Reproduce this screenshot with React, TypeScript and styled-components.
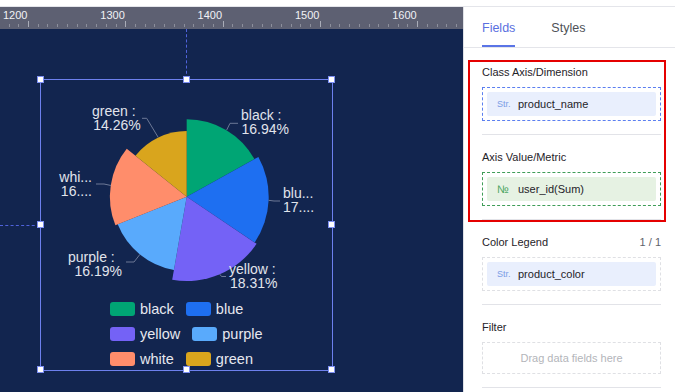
import React from "react";
import styled, { createGlobalStyle } from "styled-components";

const GlobalStyle = createGlobalStyle`
    html, body {
        margin: 0;
        padding: 0;
        background: #ffffff;
    }
    body {
        font-family: "Liberation Sans", Arial, sans-serif;
    }
`;

type Slice = { name: string; pct: number; color: string; r: number };

const slices: Slice[] = [
    { name: "black", pct: 16.94, color: "#00a574", r: 77.5 },
    { name: "blue", pct: 17.5, color: "#1e6ff1", r: 82 },
    { name: "yellow", pct: 18.31, color: "#7462f6", r: 84.3 },
    { name: "purple", pct: 16.19, color: "#59aafc", r: 74.3 },
    { name: "white", pct: 16.8, color: "#ff8d6b", r: 76.8 },
    { name: "green", pct: 14.26, color: "#d9a51d", r: 65.6 },
];

const colorOf = (name: string) => slices.find((s) => s.name === name)!.color;

type LabelLine = { text: string; x: number; anchor: "start" | "end" };

// label positions in page coordinates (svg viewBox is offset to match)
const labels: { y: number; rows: LabelLine[]; line: string }[] = [
    {
        y: 120,
        rows: [
            { text: "black :", x: 241, anchor: "start" },
            { text: "16.94%", x: 241.5, anchor: "start" },
        ],
        line: "226.7,130 230,123.3 238,123.3",
    },
    {
        y: 198,
        rows: [
            { text: "blu...", x: 283, anchor: "start" },
            { text: "17....", x: 283, anchor: "start" },
        ],
        line: "268.6,200.3 274,201 280,201",
    },
    {
        y: 274,
        rows: [
            { text: "yellow :", x: 229, anchor: "start" },
            { text: "18.31%", x: 230, anchor: "start" },
        ],
        line: "219.8,274.2 221.5,276.5 226,276.5",
    },
    {
        y: 262,
        rows: [
            { text: "purple :", x: 68, anchor: "start" },
            { text: "16.19%", x: 122, anchor: "end" },
        ],
        line: "139.9,254.4 134,262 126,262",
    },
    {
        y: 182,
        rows: [
            { text: "whi...", x: 92, anchor: "end" },
            { text: "16....", x: 92, anchor: "end" },
        ],
        line: "111,185.5 104,184 96,184",
    },
    {
        y: 116,
        rows: [
            { text: "green :", x: 92, anchor: "start" },
            { text: "14.26%", x: 93.3, anchor: "start" },
        ],
        line: "158.1,137.2 146.7,118.3 142,118.3",
    },
];

const legendRows = [
    ["black", "blue"],
    ["yellow", "purple"],
    ["white", "green"],
];

const rulerMarks = ["1200", "1300", "1400", "1500", "1600"];

const CX = 186.7;
const CY = 196.7;

const pt = (a: number, r: number) => [CX + r * Math.sin(a), CY - r * Math.cos(a)];

const slicePaths = (() => {
    let acc = 0;
    return slices.map((s) => {
        const a0 = (acc / 100) * Math.PI * 2;
        acc += s.pct;
        const a1 = (acc / 100) * Math.PI * 2;
        const [x0, y0] = pt(a0, s.r);
        const [x1, y1] = pt(a1, s.r);
        const large = a1 - a0 > Math.PI ? 1 : 0;
        return {
            color: s.color,
            d: `M${CX},${CY} L${x0},${y0} A${s.r},${s.r} 0 ${large} 1 ${x1},${y1} Z`,
        };
    });
})();

const ticks = (() => {
    const out: { x: number; major: boolean }[] = [];
    for (let k = -3; k < 46; k++) {
        out.push({ x: 28 + k * 9.73, major: k % 10 === 0 });
    }
    return out;
})();

const App = () => {
    return (
        <>
            <GlobalStyle />
            <Page>
                <TopStrip />
                <Main>
                    <Canvas>
                        <Ruler>
                            <RulerLabels>
                                {rulerMarks.map((m) => (
                                    <RulerLabel key={m}>{m}</RulerLabel>
                                ))}
                            </RulerLabels>
                            <svg width="463" height="8" style={{ display: "block" }}>
                                {ticks.map((t, i) => (
                                    <line
                                        key={i}
                                        x1={Math.round(t.x) + 0.5}
                                        x2={Math.round(t.x) + 0.5}
                                        y1={t.major ? 0 : 3}
                                        y2={6}
                                        stroke={t.major ? "#a9acb8" : "#8c8f9c"}
                                        strokeWidth="1"
                                    />
                                ))}
                            </svg>
                        </Ruler>
                        <Stage>
                            <GuideV />
                            <GuideH />
                            <Widget>
                                <Handle $x={0} $y={0} />
                                <Handle $x={50} $y={0} />
                                <Handle $x={100} $y={0} />
                                <Handle $x={0} $y={50} />
                                <Handle $x={100} $y={50} />
                                <Handle $x={0} $y={100} />
                                <Handle $x={50} $y={100} />
                                <Handle $x={100} $y={100} />
                                <ChartSvg width="291" height="216" viewBox="41 80 291 216">
                                    {slicePaths.map((p, i) => (
                                        <path key={i} d={p.d} fill={p.color} />
                                    ))}
                                    {labels.map((l, i) => (
                                        <g key={i}>
                                            <polyline points={l.line} fill="none" stroke="#6c7896" strokeWidth="1" />
                                            <text
                                                fill="#e1e4ec"
                                                fontSize="14"
                                                fontFamily="Liberation Sans, Arial, sans-serif"
                                            >
                                                {l.rows.map((row, j) => (
                                                    <tspan key={j} x={row.x} y={l.y + j * 13.5} textAnchor={row.anchor}>
                                                        {row.text}
                                                    </tspan>
                                                ))}
                                            </text>
                                        </g>
                                    ))}
                                </ChartSvg>
                                <Legend>
                                    {legendRows.map((row, i) => (
                                        <LegendRow key={i}>
                                            {row.map((name) => (
                                                <LegendItem key={name}>
                                                    <Swatch $color={colorOf(name)} />
                                                    <LegendText>{name}</LegendText>
                                                </LegendItem>
                                            ))}
                                        </LegendRow>
                                    ))}
                                </Legend>
                            </Widget>
                        </Stage>
                    </Canvas>
                    <Panel>
                        <Tabs>
                            <Tab $active>Fields</Tab>
                            <Tab>Styles</Tab>
                        </Tabs>
                        <Body>
                            <Highlight>
                                <Section $first>
                                    <SectionHead>
                                        <SectionTitle>Class Axis/Dimension</SectionTitle>
                                    </SectionHead>
                                    <DropZone $tone="blue">
                                        <FieldPill $tone="blue">
                                            <TypeTag $tone="blue">Str.</TypeTag>
                                            <FieldName>product_name</FieldName>
                                        </FieldPill>
                                    </DropZone>
                                </Section>
                                <Section>
                                    <SectionHead>
                                        <SectionTitle>Axis Value/Metric</SectionTitle>
                                    </SectionHead>
                                    <DropZone $tone="green">
                                        <FieldPill $tone="green">
                                            <TypeTag $tone="green">№</TypeTag>
                                            <FieldName>user_id(Sum)</FieldName>
                                        </FieldPill>
                                    </DropZone>
                                </Section>
                            </Highlight>
                            <Section>
                                <SectionHead>
                                    <SectionTitle>Color Legend</SectionTitle>
                                    <Count>1 / 1</Count>
                                </SectionHead>
                                <DropZone $tone="gray">
                                    <FieldPill $tone="blue">
                                        <TypeTag $tone="blue">Str.</TypeTag>
                                        <FieldName>product_color</FieldName>
                                    </FieldPill>
                                </DropZone>
                            </Section>
                            <Section>
                                <SectionHead>
                                    <SectionTitle>Filter</SectionTitle>
                                </SectionHead>
                                <DropZone $tone="gray" $empty>
                                    <Placeholder>Drag data fields here</Placeholder>
                                </DropZone>
                            </Section>
                        </Body>
                    </Panel>
                </Main>
            </Page>
        </>
    );
};

const Page = styled.div`
    width: 675px;
    height: 392px;
    display: flex;
    flex-direction: column;
    overflow: hidden;
    background: #ffffff;
`;

const TopStrip = styled.div`
    height: 6px;
    flex: none;
    background: #ffffff;
    border-bottom: 1px solid #e4e5ea;
`;

const Main = styled.div`
    flex: 1;
    display: flex;
    min-height: 0;
`;

const Canvas = styled.div`
    width: 463px;
    flex: none;
    display: flex;
    flex-direction: column;
`;

const Ruler = styled.div`
    height: 22px;
    flex: none;
    background: #5d6072;
    padding-top: 2px;
    box-sizing: border-box;
    display: flex;
    flex-direction: column;
`;

const RulerLabels = styled.div`
    display: flex;
    height: 12px;
    padding-left: 3px;
`;

const RulerLabel = styled.span`
    width: 97.3px;
    flex: none;
    font-size: 11px;
    line-height: 12px;
    color: #f1f2f6;
`;

const Stage = styled.div`
    flex: 1;
    position: relative;
    background: #12254f;
    overflow: hidden;
`;

const GuideV = styled.div`
    position: absolute;
    left: 186px;
    top: 0;
    height: 50px;
    border-left: 1px dashed #5063dc;
`;

const GuideH = styled.div`
    position: absolute;
    left: 0;
    top: 196px;
    width: 40px;
    border-top: 1px dashed #5063dc;
`;

const Widget = styled.div`
    position: absolute;
    left: 40px;
    top: 50px;
    width: 293px;
    height: 292px;
    box-sizing: border-box;
    border: 1px solid #6d80ee;
    display: flex;
    flex-direction: column;
`;

const Handle = styled.span<{ $x: number; $y: number }>`
    position: absolute;
    left: ${(p) => p.$x}%;
    top: ${(p) => p.$y}%;
    width: 7px;
    height: 7px;
    box-sizing: border-box;
    margin-left: -4px;
    margin-top: -4px;
    background: #ffffff;
    border: 1px solid #7d8ff2;
    z-index: 2;
`;

const ChartSvg = styled.svg`
    display: block;
    flex: none;
`;

const Legend = styled.div`
    display: flex;
    flex-direction: column;
    padding-left: 69px;
`;

const LegendRow = styled.div`
    height: 25px;
    display: flex;
    align-items: center;
    gap: 12px;
`;

const LegendItem = styled.div`
    display: flex;
    align-items: center;
    gap: 5px;
`;

const Swatch = styled.span<{ $color: string }>`
    width: 25px;
    height: 14px;
    border-radius: 3px;
    background: ${(p) => p.$color};
`;

const LegendText = styled.span`
    font-size: 14.5px;
    line-height: 16px;
    color: #e6e8ef;
`;

const Panel = styled.div`
    flex: 1;
    display: flex;
    flex-direction: column;
    border-left: 1px solid #dfe1e6;
    background: #ffffff;
`;

const Tabs = styled.div`
    height: 40px;
    flex: none;
    display: flex;
    gap: 36px;
    padding-left: 18px;
    border-bottom: 1px solid #e4e5ea;
`;

const Tab = styled.div<{ $active?: boolean }>`
    display: flex;
    align-items: center;
    padding-top: 4px;
    box-sizing: border-box;
    height: 40px;
    font-size: 12.5px;
    color: ${(p) => (p.$active ? "#5a6fe0" : "#4e5157")};
    border-bottom: 2px solid ${(p) => (p.$active ? "#5a74e6" : "transparent")};
`;

const Body = styled.div`
    display: flex;
    flex-direction: column;
    padding: 0 14px 0 18px;
`;

const Highlight = styled.div`
    position: relative;

    &::after {
        content: "";
        position: absolute;
        top: 12px;
        bottom: -2px;
        left: -14px;
        right: -5px;
        border: 2px solid #e50000;
        pointer-events: none;
    }
`;

const Section = styled.div<{ $first?: boolean }>`
    display: flex;
    flex-direction: column;
    gap: 8px;
    padding: ${(p) => (p.$first ? "17px" : "15px")} 0 13px;
    border-bottom: 1px solid #e2e3e8;
`;

const SectionHead = styled.div`
    height: 14px;
    display: flex;
    align-items: center;
    justify-content: space-between;
`;

const SectionTitle = styled.span`
    font-size: 11px;
    color: #1f2329;
`;

const Count = styled.span`
    font-size: 11px;
    color: #5f636b;
`;

const zoneBorder = {
    blue: "#5b7ff0",
    green: "#3f9d58",
    gray: "#dfe0e4",
};

const DropZone = styled.div<{ $tone: "blue" | "green" | "gray"; $empty?: boolean }>`
    height: ${(p) => (p.$empty ? "32px" : "34px")};
    box-sizing: border-box;
    padding: 4px;
    border: 1px dashed ${(p) => zoneBorder[p.$tone]};
    display: flex;
    align-items: center;
    justify-content: center;
`;

const FieldPill = styled.div<{ $tone: "blue" | "green" }>`
    flex: 1;
    align-self: stretch;
    display: flex;
    align-items: center;
    gap: 8px;
    padding-left: 10px;
    border-radius: 2px;
    background: ${(p) => (p.$tone === "green" ? "#e6f2e3" : "#e9effd")};
`;

const TypeTag = styled.span<{ $tone: "blue" | "green" }>`
    width: 13px;
    font-size: ${(p) => (p.$tone === "green" ? "11px" : "9px")};
    color: ${(p) => (p.$tone === "green" ? "#4aa461" : "#7b9ce6")};
`;

const FieldName = styled.span`
    font-size: 11px;
    color: #1f2329;
`;

const Placeholder = styled.span`
    font-size: 11px;
    color: #b3b5ba;
`;

export default App;
